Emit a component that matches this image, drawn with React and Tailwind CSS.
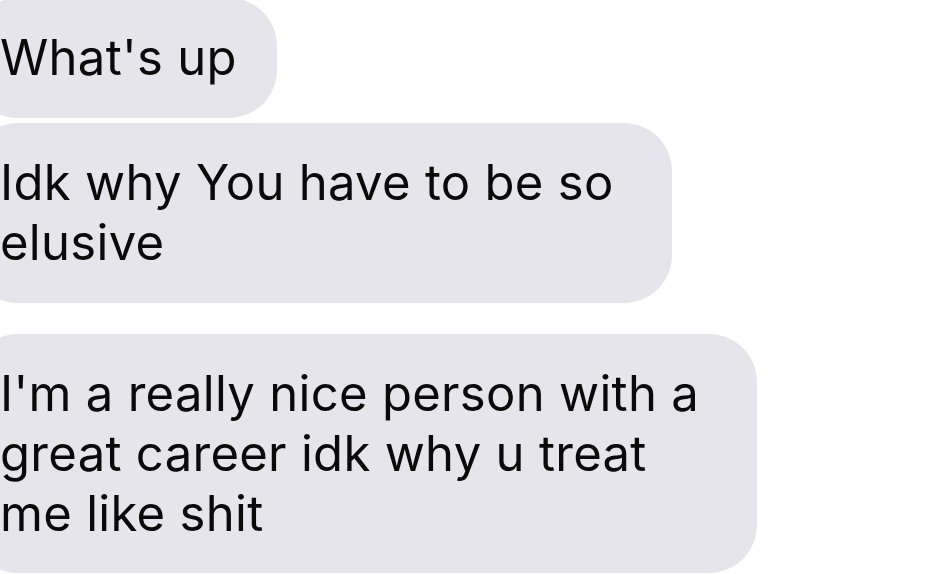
export default function App() {
  const bubble =
    "relative ml-[-30px] pl-[30px] py-[30px] bg-[#e6e5eb] rounded-[48px] text-[49px] leading-[60px] tracking-[0.3px] text-[#0a0a0a] whitespace-nowrap";

  return (
    <div
      className="w-[945px] h-[574px] overflow-hidden bg-white flex flex-col items-start"
      style={{ fontFamily: 'Inter, "Liberation Sans", Arial, sans-serif' }}
    >
      <div className={`${bubble} mt-[-2px] w-[307px]`}>What's up</div>
      <div className={`${bubble} mt-[5px] w-[702px]`}>
        Idk why You have to be so
        <br />
        elusive
      </div>
      <div className={`${bubble} mt-[31px] pb-[29px] w-[787px]`}>
        I'm a really nice person with a
        <br />
        great career idk why u treat
        <br />
        me like shit
      </div>
    </div>
  );
}
